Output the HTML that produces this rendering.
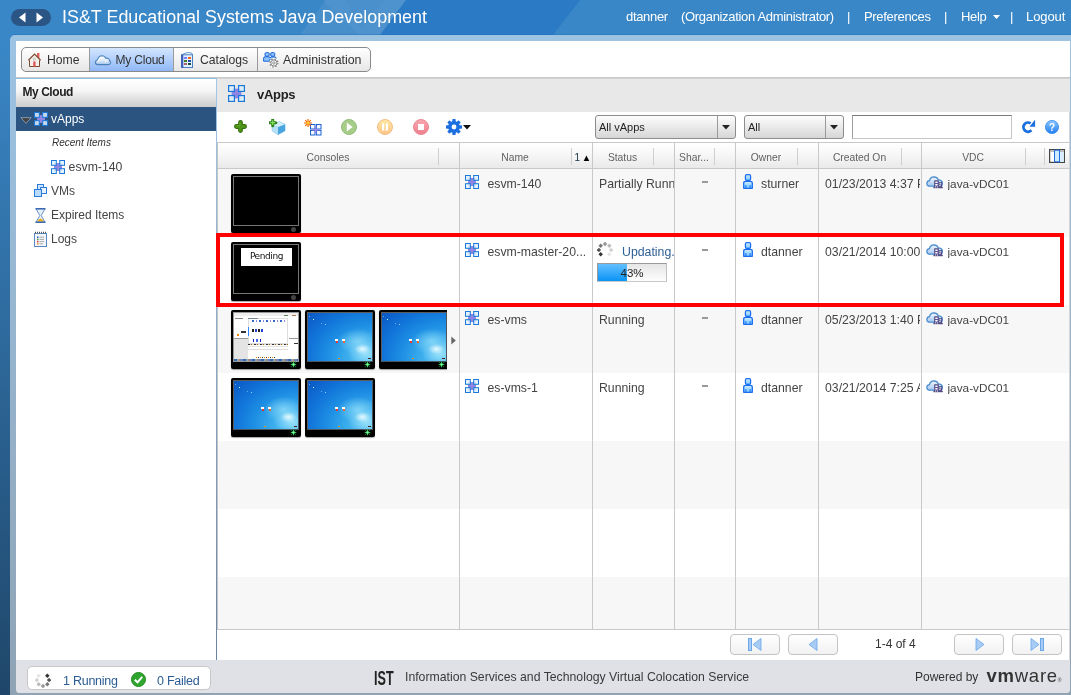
<!DOCTYPE html>
<html><head><meta charset="utf-8"><title>vCloud Director</title>
<style>
*{box-sizing:border-box;margin:0;padding:0}
html,body{width:1071px;height:695px;overflow:hidden}
body{position:relative;font-family:"Liberation Sans",sans-serif;font-size:12px;color:#444;
background:linear-gradient(#3a87c7 0,#3a87c7 40px,#1f4669 695px)}
.a{position:absolute}
.t{position:absolute;white-space:nowrap;line-height:14px}
#frame{left:10px;top:35px;width:1066px;height:664px;border:6px solid rgba(255,255,255,.5);border-radius:5px 0 0 5px}
#inner{left:16px;top:41px;width:1054px;height:640px;background:#fff}
.hl{color:#fff;font-size:13px;top:9px;line-height:16px;letter-spacing:-.32px}
/* tabs */
#tabs{left:21px;top:47px;width:350px;height:25px;border:1px solid #8a8a8a;border-radius:5px;background:linear-gradient(#fff,#e6e6e6);overflow:hidden}
.tab{position:absolute;top:0;height:23px;border-left:1px solid #9a9a9a}
.tab .t{font-size:12.2px;color:#333;top:4px;line-height:16px}
/* grid */
.row{position:absolute;left:218px;width:851px;height:68px}
.cb{position:absolute;top:143px;width:1px;height:486px;background:#c9c9c9}
.hs{position:absolute;top:148px;width:1px;height:17px;background:#cfcfcf}
.hd{position:absolute;top:150.500px;font-size:10.300px;line-height:13px;color:#626262;text-align:center;white-space:nowrap}
.mon{position:absolute;width:70px;height:58.600px;background:#000;border-radius:2px;box-shadow:0 1px 1px rgba(0,0,0,.35)}
.mon .scr{position:absolute;left:2px;top:2px;width:66px;height:50px;border:1px solid #767676}
.mon .led{position:absolute;left:60px;top:53px;width:5px;height:5px;border-radius:3px;background:#444}
.win{background:radial-gradient(ellipse 8px 5px at 85% 75%,rgba(240,253,255,.9),rgba(240,253,255,0) 100%),radial-gradient(ellipse 20px 13px at 78% 60%,rgba(150,225,250,.75),rgba(150,225,250,0) 100%),radial-gradient(ellipse 18px 12px at 90% 84%,rgba(170,232,252,.85),rgba(170,232,252,0) 100%),radial-gradient(ellipse 96px 76px at 96% 94%,#56c4f4 0,#3aaced 24%,#1d8ee3 44%,#1174d9 63%,#0c5cc6 83%,#0a49b1 100%)}
.cell{position:absolute;white-space:nowrap;line-height:14px;font-size:12.250px;color:#444;overflow:hidden}
.pb{position:absolute;top:634px;width:50px;height:21px;border:1px solid #c4c4c4;border-radius:4px;background:linear-gradient(#fff,#f1f1f1)}
#wrap{position:absolute;left:0;top:0;width:1071px;height:695px;will-change:transform}
</style></head><body><div id="wrap">
<svg width="0" height="0" style="position:absolute">
<defs>
<symbol id="vapp" viewBox="0 0 14 14">
<rect x="3" y="3" width="8" height="8" fill="#8f86e2"/>
<g fill="#def2ff" fill-opacity=".84" stroke="#1b78d8" stroke-width="1"><rect x=".5" y=".5" width="4.800" height="4.800"/><rect x="8.700" y=".5" width="4.800" height="4.800"/><rect x=".5" y="8.700" width="4.800" height="4.800"/><rect x="8.700" y="8.700" width="4.800" height="4.800"/></g>
</symbol>
<symbol id="user" viewBox="0 0 10 15">
<linearGradient id="gu" x1="0" y1="0" x2="0" y2="1"><stop offset="0" stop-color="#d4f0ff"/><stop offset="1" stop-color="#6cc4ff"/></linearGradient>
<rect x="2.400" y=".6" width="5.200" height="5.800" rx="1.400" fill="url(#gu)" stroke="#1c6cf0" stroke-width="1.200"/>
<path d="M.7 14.300V9Q.7 7.300 2.400 7.300H7.600Q9.300 7.300 9.300 9V14.300Z" fill="url(#gu)" stroke="#1c6cf0" stroke-width="1.300" stroke-linejoin="round"/>
<path d="M2.900 11V14M7.100 11V14" stroke="#1c6cf0" stroke-width="1"/>
</symbol>
<symbol id="vdc" viewBox="0 0 17 13">
<linearGradient id="gc" x1="0" y1="0" x2="0" y2="1"><stop offset="0" stop-color="#f2f8ff"/><stop offset="1" stop-color="#a4c6f0"/></linearGradient>
<path d="M4 10.200Q.9 10.200 .9 7.400Q1 5 3.500 4.700Q4 1 8 .8Q11.200 .8 12.400 3.800Q16.400 4 16.400 7.300Q16.300 10.200 13.500 10.200Z" fill="url(#gc)" stroke="#4a8ccc" stroke-width="1.300"/>
<rect x="8.200" y="4.300" width="4.600" height="7.500" fill="#4c4684"/><rect x="12.800" y="6.200" width="3.300" height="5.600" fill="#4c4684"/><rect x="7.200" y="11.200" width="9.800" height="1" fill="#4c4684"/>
<rect x="9.300" y="5.500" width="2.300" height="1.600" fill="#fff"/><rect x="9.300" y="8" width="2.300" height="1.600" fill="#fff"/><rect x="9.300" y="10.300" width=".8" height="1.300" fill="#fff"/><rect x="10.900" y="10.300" width=".8" height="1.300" fill="#fff"/>
<rect x="13.300" y="7.300" width="2" height="1.100" fill="#fff"/><rect x="13.300" y="9.100" width="1.300" height="1.100" fill="#fff"/>
</symbol>
<symbol id="spin" viewBox="0 0 16 16"><rect x="2.09" y="10.71" width="3.200" height="3.200" fill="#333" transform="rotate(45 3.69 12.31)"/><rect x="0.30" y="6.40" width="3.200" height="3.200" fill="#555" transform="rotate(45 1.90 8.00)"/><rect x="2.09" y="2.09" width="3.200" height="3.200" fill="#777" transform="rotate(45 3.69 3.69)"/><rect x="6.40" y="0.30" width="3.200" height="3.200" fill="#999" transform="rotate(45 8.00 1.90)"/><rect x="10.71" y="2.09" width="3.200" height="3.200" fill="#bbb" transform="rotate(45 12.31 3.69)"/><rect x="12.50" y="6.40" width="3.200" height="3.200" fill="#d2d2d2" transform="rotate(45 14.10 8.00)"/><rect x="10.71" y="10.71" width="3.200" height="3.200" fill="#e6e6e6" transform="rotate(45 12.31 12.31)"/></symbol>
<symbol id="gled" viewBox="0 0 7 7"><path d="M1 1L6 6M6 1L1 6" stroke="#157a2a" stroke-width="1.200" stroke-dasharray="1 1"/><path d="M3.500 0L4.300 2.700L7 3.500L4.300 4.300L3.500 7L2.700 4.300L0 3.500L2.700 2.700Z" fill="#3de264"/><rect x="2.700" y="2.700" width="1.600" height="1.600" fill="#9dffad"/></symbol>
</defs></svg>

<!-- header -->
<svg class="a" style="left:0;top:0" width="1071" height="35">
<polygon points="380,35 406,0 580,0 553,35" fill="#2a7ac6"/>
<polygon points="300,35 326,0 406,0 380,35" fill="#fff" opacity=".07"/>
<polygon points="322,0 360,35 380,35 406,0" fill="#fff" opacity=".04"/>
<polygon points="345,0 362,30 384,0" fill="#2a7ac6" opacity=".12"/>
</svg>
<div class="a" style="left:11px;top:9px;width:40px;height:17px;border-radius:9px;background:#2a5585"></div>
<svg class="a" style="left:11px;top:9px" width="40" height="17"><path d="M8 8.500L14.500 3.500V13.500Z M32 8.500L25.500 3.500V13.500Z" fill="#fff"/></svg>
<div class="t" style="left:62px;top:6px;font-size:17.920px;line-height:22px;color:#fff">IS&amp;T Educational Systems Java Development</div>
<div class="t hl" style="left:626px">dtanner</div>
<div class="t hl" style="left:681px">(Organization Administrator)</div>
<div class="t hl" style="left:847px">|</div>
<div class="t hl" style="left:864px">Preferences</div>
<div class="t hl" style="left:944px">|</div>
<div class="t hl" style="left:961px">Help</div>
<svg class="a" style="left:993px;top:15px" width="7" height="4"><path d="M0 0H7L3.5 4Z" fill="#fff"/></svg>
<div class="t hl" style="left:1010px">|</div>
<div class="t hl" style="left:1026px;letter-spacing:-.1px">Logout</div>

<div class="a" style="left:13px;top:34px;width:1058px;height:1px;background:rgba(30,105,185,.36)"></div>
<div class="a" id="frame"></div>
<div class="a" id="inner"></div>
<div class="a" style="left:16px;top:681px;width:1054px;height:12px;background:rgba(255,255,255,.5)"></div>

<!-- tabs -->
<div class="a" id="tabs">
 <div class="tab" style="left:-1px;width:68px"><div class="t" style="left:25px">Home</div></div>
 <div class="tab" style="left:67px;width:84px;background:linear-gradient(#d3e6ff,#8fb7f7)"><div class="t" style="left:25.500px;font-size:12px;letter-spacing:-.2px">My Cloud</div></div>
 <div class="tab" style="left:151px;width:84px"><div class="t" style="left:26px">Catalogs</div></div>
 <div class="tab" style="left:235px;width:115px"><div class="t" style="left:25px;font-size:12.400px">Administration</div></div>
</div>
<!-- home icon -->
<svg class="a" style="left:28px;top:53px" width="13" height="14" viewBox="0 0 13 14"><rect x="9" y="0" width="2.4" height="5" fill="#e0605a"/><path d="M1.5 7V13.5H11.5V7" fill="#f4f1ec" stroke="#7a4a30"/><path d="M.3 7.3L6.5 1L12.7 7.3" fill="#f4f1ec" stroke="#7a4a30" stroke-width="1.2"/><rect x="5.2" y="8.5" width="2.4" height="5" fill="#e05a5a"/><rect x="5.2" y="5" width="2.2" height="2.2" fill="#ddd" stroke="#bbb" stroke-width=".5"/></svg>
<!-- cloud icon -->
<svg class="a" style="left:94px;top:54px" width="18" height="12" viewBox="0 0 18 12"><defs><linearGradient id="gcl" x1="0" y1="0" x2="0" y2="1"><stop offset="0" stop-color="#fff"/><stop offset=".45" stop-color="#e4effb"/><stop offset="1" stop-color="#a4c4ea"/></linearGradient></defs><path d="M3.800 10.600Q1.400 10.500 1.400 8.200Q1.500 6.200 3.700 5.800Q4.300 1.900 8 1.700Q10.800 1.700 11.900 4.400Q13 3.900 14.100 4.500Q15.700 5.300 15.700 7Q16.700 7.600 16.600 8.800Q16.400 10.600 14.300 10.600Z" fill="url(#gcl)" stroke="#4c82ba" stroke-width="1.150" stroke-linejoin="round"/><path d="M11.500 8.500Q11.500 5.800 13.400 5.600" fill="none" stroke="#fff" stroke-width=".9" opacity=".9"/><path d="M4.200 7.800Q4.600 3.800 8 3.300" fill="none" stroke="#fff" stroke-width="1" opacity=".9"/></svg>
<!-- catalog icon -->
<svg class="a" style="left:181px;top:52px" width="12" height="16" viewBox="0 0 12 16"><path d="M.5 2.800L6 .7Q9.500 .2 11.300 1.800L11.500 3.300" fill="#fff" stroke="#4a86c6" stroke-width=".9"/><rect x=".5" y="2.800" width="11" height="12.700" fill="#e4f1ff" stroke="#4a80c2"/><rect x=".3" y="2.800" width="2" height="13" fill="#3c5cb8"/><rect x="3" y="5" width="3" height="2" fill="#7c7cff"/><rect x="7" y="5" width="3" height="2" fill="#ff6212"/><rect x="3" y="8" width="3" height="2" fill="#3c7c22"/><rect x="7" y="8" width="3" height="2" fill="#2a4aa2"/><rect x="3" y="11" width="3" height="2" fill="#a8626a"/><rect x="7" y="11" width="3" height="2" fill="#1a4c3c"/></svg>
<!-- admin icon -->
<svg class="a" style="left:263px;top:52px" width="16" height="16" viewBox="0 0 16 16"><g fill="#8ec4ff" stroke="#1b62d0" stroke-width="1"><rect x="2" y=".6" width="4.200" height="3.600" rx="1.300"/><rect x="7.600" y=".6" width="4.200" height="3.600" rx="1.300"/><path d="M.6 9.200V6.200Q.6 4.800 2 4.800H6Q7 4.800 7 6L8 4.800H11.600Q13 4.800 13 6.200V7.500H6.500V9.200Z"/></g><circle cx="10.900" cy="11" r="3.600" fill="#fff" stroke="#fff" stroke-width="2.600"/><circle cx="10.900" cy="11" r="4.100" fill="none" stroke="#777" stroke-width="1.100" stroke-dasharray="1.610 1.610"/><circle cx="10.900" cy="11" r="3.100" fill="#fafafa" stroke="#777" stroke-width=".9"/><circle cx="10.900" cy="11" r="1.200" fill="#fff" stroke="#777" stroke-width=".8"/></svg>

<!-- separators under tabs -->
<div class="a" style="left:16px;top:77px;width:1054px;height:1px;background:#c8c8c8"></div>

<!-- left panel -->
<div class="a" style="left:16px;top:78px;width:201px;height:582px;background:#fff;border-top:1px solid #8fbfe0"></div><div class="a" style="left:216px;top:78px;width:1px;height:582px;background:linear-gradient(#a2c6e8,#8aa8c8 50%,#68849f)"></div>
<div class="a" style="left:16px;top:79px;width:200px;height:28px;background:linear-gradient(#fff 0,#f6f6f6 40%,#cdcdcd 100%)"></div>
<div class="t" style="left:22.500px;top:85px;font-weight:bold;font-size:12px;color:#222;letter-spacing:-.45px">My Cloud</div>
<div class="a" style="left:16px;top:107px;width:200px;height:24px;background:#2b5480"></div>
<svg class="a" style="left:20px;top:117px" width="12" height="7"><path d="M.8 .6H11.2L6 6.4Z" fill="#444" stroke="#9ab" stroke-width=".8"/></svg>
<svg class="a" style="left:34px;top:112px" width="14" height="14"><use href="#vapp"/></svg>
<div class="t" style="left:51px;top:112px;color:#fff">vApps</div>
<div class="t" style="left:52px;top:137px;font-size:10px;font-style:italic;color:#333;line-height:12px">Recent Items</div>
<svg class="a" style="left:51px;top:160px" width="14" height="14"><use href="#vapp"/></svg>
<div class="t" style="left:68.600px;top:160px;font-size:12.250px">esvm-140</div>
<!-- VMs icon -->
<svg class="a" style="left:34px;top:184px" width="13" height="13" viewBox="0 0 13 13"><g fill="#cfe6ff" stroke="#2a7bdb"><rect x="3.5" y=".5" width="6" height="6"/><rect x="6.5" y="3.5" width="6" height="6" fill="#e6f2ff"/><rect x=".5" y="5.5" width="7" height="7" fill="#b8dcff"/></g></svg>
<div class="t" style="left:51px;top:184px">VMs</div>
<!-- hourglass -->
<svg class="a" style="left:35px;top:208px" width="11" height="15" viewBox="0 0 11 15"><path d="M1 .8H10L6.2 7.5L10 14.2H1L4.8 7.5Z" fill="#e8f0fa" stroke="#5a86c0" stroke-width=".9"/><path d="M2 13.8Q5.5 7 9 13.8Z" fill="#e8b020"/><path d="M.5 .7H10.5M.5 14.3H10.5" stroke="#3a6ab0" stroke-width="1.4"/></svg>
<div class="t" style="left:51px;top:208px">Expired Items</div>
<!-- logs -->
<svg class="a" style="left:34px;top:231px" width="13" height="16" viewBox="0 0 13 16"><rect x=".5" y="2.5" width="12" height="13" fill="#f2f6fb" stroke="#5a86c0"/><path d="M1 1.5H12" stroke="#555" stroke-width="1.5" stroke-dasharray="1 1"/><rect x="3" y="5.5" width="1.5" height="1.5" fill="#2a5fc0"/><rect x="3" y="7.7" width="1.5" height="1.5" fill="#3a9a3a"/><rect x="3" y="9.9" width="1.5" height="1.5" fill="#e03030"/><rect x="3" y="12.1" width="1.5" height="1.5" fill="#e09020"/><path d="M5.5 6.2H10M5.5 8.4H10M5.5 10.6H10M5.5 12.8H9" stroke="#aaa" stroke-width="1"/></svg>
<div class="t" style="left:51px;top:232px">Logs</div>

<!-- main -->
<div class="a" style="left:217px;top:78px;width:853px;height:34px;background:#e8e8e8;border-top:1px solid #d4d4d4"></div>
<svg class="a" style="left:228px;top:85px" width="17" height="17"><use href="#vapp"/></svg>
<div class="t" style="left:257px;top:87px;font-size:13px;font-weight:bold;color:#222;line-height:16px;letter-spacing:-.3px">vApps</div>

<!-- toolbar icons -->
<svg class="a" style="left:234px;top:120px" width="13" height="13" viewBox="0 0 13 13"><path d="M6.500 2.400V10.600M2.400 6.500H10.600" stroke="#356f10" stroke-width="4.800" stroke-linecap="round"/><path d="M6.500 2.600V10.400M2.600 6.500H10.400" stroke="#4d9419" stroke-width="2.800" stroke-linecap="round"/><path d="M5.800 2.800V5.800H2.800" stroke="#6db030" stroke-width="1" fill="none" opacity=".7"/></svg>
<svg class="a" style="left:269px;top:119px" width="17" height="16" viewBox="0 0 17 16"><path d="M3.200 5.500L10.500 2.800L16 5.300V11.800L9 15.600L3.200 11.800Z" fill="#7cc4ee" stroke="#5aa8dc" stroke-width=".6"/><path d="M3.200 5.500L9 8V15.600L3.200 11.800Z" fill="#b4e0f8"/><path d="M9 8L16 5.300V11.800L9 15.600Z" fill="#49a5e0"/><path d="M3.200 5.500L10.500 2.800L16 5.300L9 8Z" fill="#d2eefc"/><path d="M3.700 .6V6.800M.6 3.700H6.800" stroke="#2a8418" stroke-width="3" stroke-linecap="round"/><path d="M3.700 1.300V6.100M1.300 3.700H6.100" stroke="#86e060" stroke-width="1.200"/></svg>
<svg class="a" style="left:304px;top:119px" width="18" height="17" viewBox="0 0 18 17"><g stroke="#1b62d0" fill="#f4f8ff"><rect x="6.5" y="5.5" width="4.5" height="4.5"/><rect x="12.5" y="5.5" width="4.500" height="4.5"/><rect x="6.500" y="11.5" width="4.5" height="4.5"/><rect x="12.5" y="11.5" width="4.5" height="4.500"/></g><rect x="11.100" y="7" width="1.400" height="7.500" fill="#9a88e6"/><rect x="8" y="10.100" width="7.500" height="1.400" fill="#9a88e6"/><path d="M4 0V8M0 4H8M1.200 1.200L6.800 6.800M6.800 1.200L1.200 6.800" stroke="#f26000" stroke-width="1.150"/><circle cx="4" cy="4" r="1.700" fill="#ffc830"/></svg>
<svg class="a" style="left:341px;top:119px" width="16" height="16"><circle cx="8" cy="8" r="7.500" fill="#a6cd88" stroke="#93bb78"/><path d="M5.800 3.500L11.600 8L5.800 12.500Z" fill="#fff"/></svg>
<svg class="a" style="left:377px;top:119px" width="16" height="16"><defs><linearGradient id="gp" x1="0" y1="0" x2="0" y2="1"><stop offset="0" stop-color="#ffeaa0"/><stop offset="1" stop-color="#ffc488"/></linearGradient></defs><circle cx="8" cy="8" r="7.500" fill="url(#gp)" stroke="#f0bd85"/><rect x="5" y="4.500" width="2.200" height="7" fill="#fff"/><rect x="8.800" y="4.500" width="2.200" height="7" fill="#fff"/></svg>
<svg class="a" style="left:413px;top:119px" width="16" height="16"><defs><linearGradient id="gs" x1="0" y1="0" x2="0" y2="1"><stop offset="0" stop-color="#f9a8b0"/><stop offset="1" stop-color="#f07e8e"/></linearGradient></defs><circle cx="8" cy="8" r="7.500" fill="url(#gs)" stroke="#e68890"/><rect x="5" y="5" width="6" height="6" fill="#fff"/></svg>
<svg class="a" style="left:446px;top:119px" width="16" height="16" viewBox="0 0 16 16"><g fill="#1c6fe0"><rect x="6.300" y="0" width="3.400" height="4" rx=".8" transform="rotate(0 8 8)"/><rect x="6.300" y="0" width="3.400" height="4" rx=".8" transform="rotate(45 8 8)"/><rect x="6.300" y="0" width="3.400" height="4" rx=".8" transform="rotate(90 8 8)"/><rect x="6.300" y="0" width="3.400" height="4" rx=".8" transform="rotate(135 8 8)"/><rect x="6.300" y="0" width="3.400" height="4" rx=".8" transform="rotate(180 8 8)"/><rect x="6.300" y="0" width="3.400" height="4" rx=".8" transform="rotate(225 8 8)"/><rect x="6.300" y="0" width="3.400" height="4" rx=".8" transform="rotate(270 8 8)"/><rect x="6.300" y="0" width="3.400" height="4" rx=".8" transform="rotate(315 8 8)"/><circle cx="8" cy="8" r="5.900"/></g><circle cx="8" cy="8" r="2.400" fill="#fff"/></svg>
<svg class="a" style="left:463px;top:125px" width="8" height="5"><path d="M0 0H8L4 4.500Z" fill="#111"/></svg>

<!-- selects -->
<div class="a" style="left:595px;top:115px;width:141px;height:24px;border:1px solid #8c8c8c;border-radius:3px;background:linear-gradient(#fdfdfd,#d6d6d6)"><div class="a" style="left:121px;top:0;width:1px;height:22px;background:#9a9a9a"></div><div class="t" style="left:3px;top:4px;color:#222;font-size:11px">All vApps</div><svg class="a" style="left:126px;top:9px" width="8" height="5"><path d="M0 0H8L4 4.500Z" fill="#222"/></svg></div>
<div class="a" style="left:744px;top:115px;width:100px;height:24px;border:1px solid #8c8c8c;border-radius:3px;background:linear-gradient(#fdfdfd,#d6d6d6)"><div class="a" style="left:80px;top:0;width:1px;height:22px;background:#9a9a9a"></div><div class="t" style="left:3px;top:4px;color:#222;font-size:11px">All</div><svg class="a" style="left:85px;top:9px" width="8" height="5"><path d="M0 0H8L4 4.500Z" fill="#222"/></svg></div>
<div class="a" style="left:852px;top:115px;width:160px;height:24px;border:1px solid #c6c6c6;border-top-color:#7a7a7a;border-left-color:#a0a0a0;background:#fff"></div>
<!-- refresh -->
<svg class="a" style="left:1021px;top:119px" width="15" height="15" viewBox="0 0 15 15"><path d="M10.400 11.300A4.600 4.600 0 1 1 9.600 4.300" fill="none" stroke="#1b6fe0" stroke-width="2.800"/><path d="M8.400 7.800H14.100V.8Z" fill="#1b6fe0"/></svg>
<!-- help -->
<svg class="a" style="left:1045px;top:120px" width="14" height="14"><defs><linearGradient id="gh" x1="0" y1="0" x2="0" y2="1"><stop offset="0" stop-color="#8cc8ff"/><stop offset="1" stop-color="#1f7ef0"/></linearGradient></defs><circle cx="7" cy="7" r="6.600" fill="url(#gh)" stroke="#3a8cec" stroke-width=".8"/><text x="7" y="10.800" text-anchor="middle" font-family="Liberation Sans,sans-serif" font-weight="bold" font-size="10" fill="#fff">?</text></svg>

<!-- grid -->
<div class="a" style="left:217px;top:142px;width:853px;height:1px;background:#c9c9c9"></div>
<div class="a" style="left:218px;top:143px;width:851px;height:26px;background:linear-gradient(#fff 0,#f6f6f6 50%,#e9e9e9 100%);border-bottom:1px solid #c9c9c9"></div>
<div class="row" style="top:169px;background:#f7f7f7"></div>
<div class="row" style="top:305px;background:#f7f7f7"></div>
<div class="row" style="top:441px;background:#f7f7f7"></div>
<div class="row" style="top:577px;background:#f7f7f7;height:52px"></div>
<div class="a" style="left:217px;top:629px;width:853px;height:1px;background:#c9c9c9"></div>

<div class="cb" style="left:217px;background:#c4c4c4"></div><div class="cb" style="left:459px"></div><div class="cb" style="left:592px"></div><div class="cb" style="left:674px"></div><div class="cb" style="left:735px"></div><div class="cb" style="left:818px"></div><div class="cb" style="left:921px"></div><div class="cb" style="left:1069px;top:112px;height:548px;background:#d5d5d5"></div>
<div class="hs" style="left:438px"></div><div class="hs" style="left:571px"></div><div class="hs" style="left:653px"></div><div class="hs" style="left:714px"></div><div class="hs" style="left:797px"></div><div class="hs" style="left:901px"></div><div class="hs" style="left:1025px"></div><div class="hs" style="left:1044px"></div>
<div class="hd" style="left:218px;width:220px">Consoles</div>
<div class="hd" style="left:459px;width:112px">Name</div>
<div class="hd" style="left:574px;width:17px;color:#134;font-size:10px;top:151px;letter-spacing:-.5px">1 <span style="color:#000;font-size:9.500px">▲</span></div>
<div class="hd" style="left:592px;width:61px">Status</div>
<div class="hd" style="left:675px;width:38px">Shar...</div>
<div class="hd" style="left:735px;width:62px">Owner</div>
<div class="hd" style="left:818px;width:83px">Created On</div>
<div class="hd" style="left:921px;width:104px">VDC</div>
<svg class="a" style="left:1049px;top:149px" width="16" height="14"><rect x=".6" y=".6" width="14.800" height="12.800" fill="#fff" stroke="#444" stroke-width="1.200"/><rect x="1.200" y="1.200" width="13.600" height="1.800" fill="#bbb"/><rect x="5.500" y="1.200" width="5" height="11.600" fill="#cfeaff" stroke="#1b6fe0" stroke-width="1"/><rect x="11" y="3" width="3.800" height="9.800" fill="#d8eeff"/></svg>

<!-- row content placeholder -->
<div id="rows">
<div class="a" style="left:218px;top:169px;width:229px;height:272px;overflow:hidden">
<div class="mon" style="left:13px;top:5px"><div class="scr"></div><div class="led"></div></div>
<div class="mon" style="left:13px;top:73px"><div class="scr"></div><div class="led"></div><div class="a" style="left:10px;top:6px;width:51px;height:18px;background:#fff;text-align:center;font-size:9px;line-height:17px;color:#111;font-family:'DejaVu Sans','Liberation Sans',sans-serif;letter-spacing:-.4px">Pending</div></div>
<div class="mon" style="left:13px;top:141px"><div class="scr" style="background:#fff;border-color:#999"><i class="a" style="left:0;top:0;width:64px;height:3px;background:#eee"></i><i class="a" style="left:0;top:26px;width:14px;height:20px;background:#e4e4e4"></i><i class="a" style="left:0;top:25px;width:14px;height:1px;background:#999"></i><i class="a" style="left:55px;top:25px;width:9px;height:1px;background:#999"></i><i class="a" style="left:14px;top:5px;width:40px;height:26px;background:#fff;border:1px solid #ddd"></i><i class="a" style="left:14px;top:14px;width:1px;height:9px;background:#38f"></i><i class="a" style="left:18px;top:7px;width:34px;height:2px;background:repeating-linear-gradient(90deg,#36c 0 2px,#fff 2px 4px,#88d 4px 5px,#fff 5px 7px)"></i><i class="a" style="left:18px;top:16px;width:11px;height:3px;background:repeating-linear-gradient(90deg,#222 0 2px,#fff 2px 3px,#24c 3px 5px,#fff 5px 6px)"></i><i class="a" style="left:19px;top:26px;width:10px;height:3px;background:repeating-linear-gradient(90deg,#12c 0 1px,#fff 1px 3px,#46e 3px 5px,#fff 5px 7px)"></i><i class="a" style="left:7px;top:18px;width:5px;height:2px;background:#333"></i><i class="a" style="left:3px;top:21px;width:2px;height:2px;background:#e80"></i><i class="a" style="left:1px;top:5px;width:8px;height:1px;background:#888"></i><i class="a" style="left:14px;top:5px;width:10px;height:1px;background:#789"></i><i class="a" style="left:50px;top:2px;width:4px;height:1px;background:#585"></i><i class="a" style="left:58px;top:2px;width:4px;height:1px;background:#a75"></i><i class="a" style="left:60px;top:30px;width:4px;height:1px;background:#333"></i><i class="a" style="left:14px;top:33px;width:40px;height:1px;background:#e4e4e4"></i><i class="a" style="left:14px;top:31px;width:40px;height:1px;background:repeating-linear-gradient(90deg,#333 0 2px,#ccc 2px 3px,#a60 3px 4px,#ddd 4px 6px)"></i><i class="a" style="left:14px;top:36px;width:40px;height:1px;background:#ddd"></i><i class="a" style="left:22px;top:44px;width:20px;height:1px;background:repeating-linear-gradient(90deg,#e80 0 1px,#fff 1px 2px,#333 2px 3px,#fff 3px 4px)"></i><i class="a" style="left:0;top:46px;width:64px;height:2px;background:repeating-linear-gradient(90deg,#3a6ab0 0 3px,#8ab 3px 5px,#c84 5px 6px,#6a8ac0 6px 9px)"></i></div><svg class="a" style="left:59px;top:51px" width="7" height="7"><use href="#gled"/></svg></div>
<div class="mon" style="left:87px;top:141px"><div class="scr win" style="border-color:#5c5c5c #4a5560 #4a5560 #5c5c5c"><i class="a" style="left:1px;top:3px;width:1px;height:1px;background:#6ae"></i><i class="a" style="left:30px;top:45px;width:2px;height:1px;background:#e90"></i><i class="a" style="left:60px;top:45px;width:3px;height:1px;background:#422"></i><i class="a" style="left:28px;top:27px;width:2px;height:3px;background:#e33"></i><i class="a" style="left:27px;top:26px;width:3px;height:2px;background:#fff"></i><i class="a" style="left:35px;top:27px;width:2px;height:3px;background:#e63"></i><i class="a" style="left:34px;top:26px;width:3px;height:2px;background:#fff"></i><i class="a" style="left:5px;top:6px;width:1px;height:1px;background:#cfe"></i><i class="a" style="left:13px;top:10px;width:1px;height:1px;background:#6ae"></i><i class="a" style="left:17px;top:11px;width:1px;height:1px;background:#9cf"></i></div><svg class="a" style="left:59px;top:51px" width="7" height="7"><use href="#gled"/></svg></div>
<div class="mon" style="left:161px;top:141px"><div class="scr win" style="border-color:#5c5c5c #4a5560 #4a5560 #5c5c5c"><i class="a" style="left:1px;top:3px;width:1px;height:1px;background:#6ae"></i><i class="a" style="left:30px;top:45px;width:2px;height:1px;background:#e90"></i><i class="a" style="left:60px;top:45px;width:3px;height:1px;background:#422"></i><i class="a" style="left:28px;top:27px;width:2px;height:3px;background:#e33"></i><i class="a" style="left:27px;top:26px;width:3px;height:2px;background:#fff"></i><i class="a" style="left:35px;top:27px;width:2px;height:3px;background:#e63"></i><i class="a" style="left:34px;top:26px;width:3px;height:2px;background:#fff"></i><i class="a" style="left:5px;top:6px;width:1px;height:1px;background:#cfe"></i><i class="a" style="left:13px;top:10px;width:1px;height:1px;background:#6ae"></i><i class="a" style="left:17px;top:11px;width:1px;height:1px;background:#9cf"></i></div><svg class="a" style="left:59px;top:51px" width="7" height="7"><use href="#gled"/></svg></div>
<div class="mon" style="left:13px;top:209px"><div class="scr win" style="border-color:#5c5c5c #4a5560 #4a5560 #5c5c5c"><i class="a" style="left:1px;top:3px;width:1px;height:1px;background:#6ae"></i><i class="a" style="left:30px;top:45px;width:2px;height:1px;background:#e90"></i><i class="a" style="left:60px;top:45px;width:3px;height:1px;background:#422"></i><i class="a" style="left:28px;top:27px;width:2px;height:3px;background:#e33"></i><i class="a" style="left:27px;top:26px;width:3px;height:2px;background:#fff"></i><i class="a" style="left:35px;top:27px;width:2px;height:3px;background:#e63"></i><i class="a" style="left:34px;top:26px;width:3px;height:2px;background:#fff"></i><i class="a" style="left:5px;top:6px;width:1px;height:1px;background:#cfe"></i><i class="a" style="left:13px;top:10px;width:1px;height:1px;background:#6ae"></i><i class="a" style="left:17px;top:11px;width:1px;height:1px;background:#9cf"></i></div><svg class="a" style="left:59px;top:51px" width="7" height="7"><use href="#gled"/></svg></div>
<div class="mon" style="left:87px;top:209px"><div class="scr win" style="border-color:#5c5c5c #4a5560 #4a5560 #5c5c5c"><i class="a" style="left:1px;top:3px;width:1px;height:1px;background:#6ae"></i><i class="a" style="left:30px;top:45px;width:2px;height:1px;background:#e90"></i><i class="a" style="left:60px;top:45px;width:3px;height:1px;background:#422"></i><i class="a" style="left:28px;top:27px;width:2px;height:3px;background:#e33"></i><i class="a" style="left:27px;top:26px;width:3px;height:2px;background:#fff"></i><i class="a" style="left:35px;top:27px;width:2px;height:3px;background:#e63"></i><i class="a" style="left:34px;top:26px;width:3px;height:2px;background:#fff"></i><i class="a" style="left:5px;top:6px;width:1px;height:1px;background:#cfe"></i><i class="a" style="left:13px;top:10px;width:1px;height:1px;background:#6ae"></i><i class="a" style="left:17px;top:11px;width:1px;height:1px;background:#9cf"></i></div><svg class="a" style="left:59px;top:51px" width="7" height="7"><use href="#gled"/></svg></div>
</div>
<svg class="a" style="left:451px;top:336px" width="5" height="9"><path d="M.3 .5L4.800 4.500L.3 8.500Z" fill="#666"/></svg>
<svg class="a" style="left:465px;top:175px" width="14" height="14"><use href="#vapp"/></svg>
<div class="cell" style="left:487.500px;top:177px;width:104px">esvm-140</div>
<div class="cell" style="left:599px;top:177px;width:75px">Partially Running</div>
<div class="a" style="left:702px;top:181px;width:6px;height:2px;background:#999"></div>
<svg class="a" style="left:743px;top:174px" width="10" height="15"><use href="#user"/></svg>
<div class="cell" style="left:761px;top:177px;width:56px">sturner</div>
<div class="cell" style="left:825px;top:177px;width:95px">01/23/2013 4:37 PM</div>
<svg class="a" style="left:926px;top:176px" width="17" height="13"><use href="#vdc"/></svg>
<div class="cell" style="left:947.500px;top:177px;width:110px;font-size:11.800px">java-vDC01</div>
<svg class="a" style="left:465px;top:243px" width="14" height="14"><use href="#vapp"/></svg>
<div class="cell" style="left:487.500px;top:245px;width:104px">esvm-master-20...</div>
<div class="a" style="left:702px;top:249px;width:6px;height:2px;background:#999"></div>
<svg class="a" style="left:743px;top:242px" width="10" height="15"><use href="#user"/></svg>
<div class="cell" style="left:761px;top:245px;width:56px">dtanner</div>
<div class="cell" style="left:825px;top:245px;width:95px">03/21/2014 10:00 AM</div>
<svg class="a" style="left:926px;top:244px" width="17" height="13"><use href="#vdc"/></svg>
<div class="cell" style="left:947.500px;top:245px;width:110px;font-size:11.800px">java-vDC01</div>
<svg class="a" style="left:465px;top:311px" width="14" height="14"><use href="#vapp"/></svg>
<div class="cell" style="left:487.500px;top:313px;width:104px">es-vms</div>
<div class="cell" style="left:599px;top:313px;width:75px">Running</div>
<div class="a" style="left:702px;top:317px;width:6px;height:2px;background:#999"></div>
<svg class="a" style="left:743px;top:310px" width="10" height="15"><use href="#user"/></svg>
<div class="cell" style="left:761px;top:313px;width:56px">dtanner</div>
<div class="cell" style="left:825px;top:313px;width:95px">05/23/2013 1:40 PM</div>
<svg class="a" style="left:926px;top:312px" width="17" height="13"><use href="#vdc"/></svg>
<div class="cell" style="left:947.500px;top:313px;width:110px;font-size:11.800px">java-vDC01</div>
<svg class="a" style="left:465px;top:379px" width="14" height="14"><use href="#vapp"/></svg>
<div class="cell" style="left:487.500px;top:381px;width:104px">es-vms-1</div>
<div class="cell" style="left:599px;top:381px;width:75px">Running</div>
<div class="a" style="left:702px;top:385px;width:6px;height:2px;background:#999"></div>
<svg class="a" style="left:743px;top:378px" width="10" height="15"><use href="#user"/></svg>
<div class="cell" style="left:761px;top:381px;width:56px">dtanner</div>
<div class="cell" style="left:825px;top:381px;width:95px">03/21/2014 7:25 AM</div>
<svg class="a" style="left:926px;top:380px" width="17" height="13"><use href="#vdc"/></svg>
<div class="cell" style="left:947.500px;top:381px;width:110px;font-size:11.800px">java-vDC01</div>
<svg class="a" style="left:597px;top:241.700px" width="16" height="16"><use href="#spin"/></svg>
<div class="cell" style="left:622px;top:245px;width:52px;color:#2c5f96;font-size:12.300px">Updating...</div>
<div class="a" style="left:597px;top:263px;width:70px;height:19px;border:1px solid #9a9a9a;border-bottom-color:#c8c8c8;border-right-color:#c0c0c0;background:linear-gradient(#e6e6e6,#fdfdfd)"><div class="a" style="left:0;top:0;width:29px;height:17px;background:linear-gradient(#64c0ff,#0a94f5)"></div><div class="t" style="left:0;width:68px;text-align:center;top:2px;color:#222;font-size:11.500px">43%</div></div>
</div>

<!-- pager -->
<div class="pb" style="left:730px"><svg class="a" style="left:17px;top:3px" width="14" height="13"><rect x=".5" y=".5" width="3" height="12" fill="#a8ccf4" stroke="#6aa6ea"/><path d="M13 .500V12.500L5 6.500Z" fill="#a8ccf4" stroke="#6aa6ea" stroke-width=".8"/></svg></div>
<div class="pb" style="left:788px"><svg class="a" style="left:19px;top:3px" width="10" height="13"><path d="M9 .500V12.500L1 6.500Z" fill="#a8ccf4" stroke="#6aa6ea" stroke-width=".8"/></svg></div>
<div class="t" style="left:875px;top:637px;color:#333">1-4 of 4</div>
<div class="pb" style="left:954px"><svg class="a" style="left:20px;top:3px" width="10" height="13"><path d="M1 .500V12.500L9 6.500Z" fill="#a8ccf4" stroke="#6aa6ea" stroke-width=".8"/></svg></div>
<div class="pb" style="left:1012px"><svg class="a" style="left:17px;top:3px" width="14" height="13"><rect x="10.500" y=".5" width="3" height="12" fill="#a8ccf4" stroke="#6aa6ea"/><path d="M1 .500V12.500L9 6.500Z" fill="#a8ccf4" stroke="#6aa6ea" stroke-width=".8"/></svg></div>

<!-- footer -->
<div class="a" style="left:16px;top:660px;width:1054px;height:33px;background:#dfe1e6;border-radius:0 0 3.500px 3.500px"></div>
<div class="a" style="left:27px;top:666px;width:184px;height:24px;background:#fff;border:1px solid #c8c8c8;border-radius:5px"></div>
<svg class="a" style="left:35px;top:672px" width="16" height="16"><use href="#spin" transform="rotate(180 8 8)"/></svg>
<div class="t" style="left:63px;top:673px;font-size:12.500px;letter-spacing:-.25px;color:#2c5c94;line-height:16px">1 Running</div>
<svg class="a" style="left:131px;top:672px" width="15" height="15"><circle cx="7.500" cy="7.500" r="7" fill="#2fa52f" stroke="#1f8a1f"/><path d="M3.800 7.800L6.500 10.300L11.200 4.800" fill="none" stroke="#fff" stroke-width="2"/></svg>
<div class="t" style="left:157px;top:673px;font-size:12.500px;letter-spacing:-.25px;color:#2c5c94;line-height:16px">0 Failed</div>
<div class="t" style="left:374px;top:668px;font-size:21px;font-weight:bold;line-height:20px;color:#222;transform:scaleX(.6);transform-origin:0 0;letter-spacing:0">IST</div>
<div class="t" style="left:405px;top:670px;color:#3a3a3a;font-size:12.260px">Information Services and Technology Virtual Colocation Service</div>
<div class="t" style="left:915px;top:670px;color:#333">Powered by</div>
<div class="t" style="left:986.500px;top:665px;font-size:18.500px;line-height:22px;color:#333;letter-spacing:.75px"><b>vm</b>ware<span style="font-size:5px;vertical-align:top;position:relative;top:4px">®</span></div>

<!-- red highlight -->
<div class="a" style="left:216px;top:233px;width:848px;height:74px;border:4px solid #fe0000"></div>
</div></body></html>
